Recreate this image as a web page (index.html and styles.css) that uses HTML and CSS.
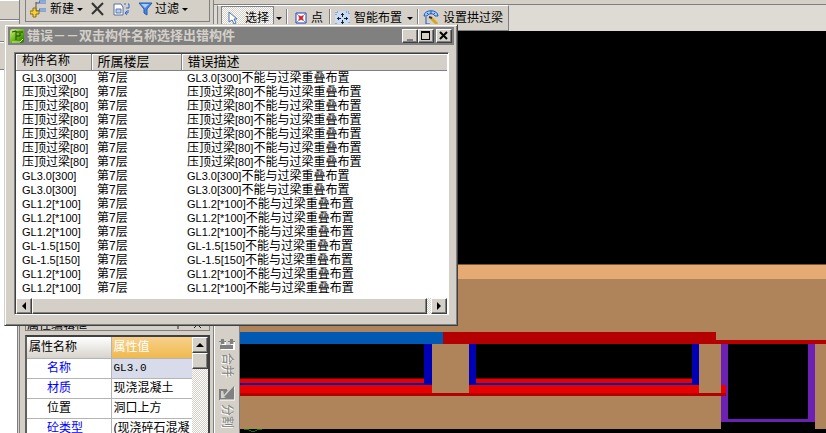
FILE: index.html
```html
<!DOCTYPE html>
<html lang="zh-CN">
<head>
<meta charset="utf-8">
<title>错误－－双击构件名称选择出错构件</title>
<link rel="stylesheet" href="styles.css">
</head>
<body>
<div class="app">
  <div class="rail">
    <div class="rail-cell"></div>
    <div class="rail-cell"></div>
    <div class="rail-cell"></div>
    <div class="rail-body"></div>
  </div>

  <aside class="side">
    <div class="side-tools">
      <button class="tool" type="button">
        <svg width="18" height="18" viewBox="0 0 18 18"><path d="M6 2v12M6 3h3M6 11h3" stroke="#555" fill="none"/><path d="M9 2h7M9 10h7" stroke="#4477c8" stroke-width="3"/><path d="M10 2h6M10 10h6" stroke="#cfe2fa"/><path d="M3 8h3v3h3v3H6v3H3v-3H0v-3h3z" fill="#f4cf3c" stroke="#8c6b12"/></svg>
        <span>新建</span><i class="caret"></i>
      </button>
      <button class="tool" type="button" aria-label="删除">
        <svg width="14" height="14" viewBox="0 0 14 14"><path d="M1 1l11 12M12 1L1 12" stroke="#333" stroke-width="2" fill="none"/></svg>
      </button>
      <button class="tool" type="button" aria-label="复制">
        <svg width="17" height="14" viewBox="0 0 17 14"><path d="M1 2h7l2 3v8H1z" fill="#fff" stroke="#5a6f96"/><path d="M3 7h5v4H3z" fill="#b8cdee" stroke="#5a7ab8"/><path d="M11 2h2M15 2h1v4h-3M15 8v3h-3M14 9l-2 2 2 2" stroke="#2f62d8" fill="none"/></svg>
      </button>
      <button class="tool" type="button">
        <svg width="15" height="14" viewBox="0 0 15 14"><path d="M1 1h13L9 7v6l-3-2V7z" fill="#3f86ee" stroke="#285cae"/><path d="M3 2h8L7 6z" fill="#a5cdff"/></svg>
        <span>过滤</span><i class="caret"></i>
      </button>
    </div>
    <div class="side-tree"></div>
    <section class="props">
      <div class="props-title"><span>属性编辑框</span>
        <svg width="34" height="12" viewBox="0 0 34 12"><path d="M1 8h8M5 8v4M3 3h4v5M21 4l7 7M28 4l-7 7" stroke="#222" fill="none"/></svg>
      </div>
      <div class="props-grid">
        <table>
          <thead><tr><th>属性名称</th><th class="value-head">属性值</th></tr></thead>
          <tbody>
            <tr><td class="name key">名称</td><td class="active">GL3.0</td></tr>
            <tr><td class="name key">材质</td><td>现浇混凝土</td></tr>
            <tr><td class="name">位置</td><td>洞口上方</td></tr>
            <tr><td class="name key">砼类型</td><td>(现浇碎石混凝</td></tr>
          </tbody>
        </table>
        <div class="vscroll">
          <button class="bevel" type="button" aria-label="向上滚动"><i class="arrow-up"></i></button>
          <div class="bevel thumb"></div>
        </div>
      </div>
    </section>
  </aside>

  <main class="work">
    <div class="work-top"></div>
    <div class="work-tools">
      <div class="draw-bar">
        <button class="tool pressed" type="button">
          <svg width="10" height="14" viewBox="0 0 10 14"><path d="M1 1v10l3-2 2 4 2-1-2-4h3z" fill="#fff" stroke="#4a6fa8"/></svg>
          <span>选择</span>
        </button>
        <i class="caret"></i><i class="sep"></i>
        <button class="tool gap-point" type="button">
          <svg width="12" height="12" viewBox="0 0 12 12"><path d="M1 1h10v10H1z" fill="#fff" stroke="#1e3fae"/><path d="M2 2l8 8M10 2l-8 8" stroke="#7a8fe0"/><path d="M4 4l4 4M8 4L4 8" stroke="#d8202c" stroke-width="2"/></svg>
          <span>点</span>
        </button>
        <i class="sep"></i>
        <button class="tool" type="button">
          <svg width="15" height="15" viewBox="0 0 15 15"><path d="M0 0h15v15H0z" fill="#c9dcf4"/><path d="M1 4V1h3M11 1h3v3M14 11v3h-3M4 14H1v-3" stroke="#5c7396" fill="none" stroke-dasharray="1 1"/><path d="M7 2h1v4H7zM7 9h1v4H7zM2 7h4v1H2zM9 7h4v1H9zM6 3h3v1H6zM6 11h3v1H6zM3 6h1v3H3zM11 6h1v3h-1z" fill="#112233"/></svg>
          <span>智能布置</span><i class="caret"></i>
        </button>
        <i class="sep"></i>
        <button class="tool" type="button">
          <svg width="16" height="16" viewBox="0 0 16 16"><path d="M1 6c0-7 14-7 14 0h-3c-1-3-7-3-8 0z" fill="#a9cdf7" stroke="#1c55c0"/><path d="M3 7v7h4M4 3l2 2M8 1v3M12 3l-2 2" stroke="#1c55c0" fill="none"/><path d="M8 8l6 6" stroke="#dca51c" stroke-width="3"/><path d="M6 7l3 1" stroke="#333" stroke-width="2"/></svg>
          <span>设置拱过梁</span>
        </button>
      </div>
    </div>
    <div class="stage">
      <div class="edit-bar">
        <button type="button">
          <svg width="16" height="12" viewBox="0 0 16 12" shape-rendering="crispEdges"><path d="M2 1h3v2h2v1H5v2H2V4H0V3h2zM11 1h3v2h2v1h-2v2h-3V4H9V3h2zM1 7h13v4H1z" fill="#808080"/><path d="M2 11h13V7h-1v4zM3 6h3V4M12 6h3V4" stroke="#fff" fill="none"/></svg>
          <span>合并</span>
        </button>
        <button type="button">
          <svg width="16" height="16" viewBox="0 0 16 16"><path d="M1 4v10h13V3M1 5h7" fill="none" stroke="#808080" stroke-width="2"/><path d="M5 12L15 1v13H9zM4 5h5L5 10z" fill="#808080"/><path d="M1 15h15V2" stroke="#fff" fill="none"/></svg>
          <span>分割</span>
        </button>
      </div>
      <svg class="model" viewBox="0 0 586 402" preserveAspectRatio="xMinYMin slice" shape-rendering="crispEdges">
        <path d="M0 0h586v402H0z" fill="#000"/>
        <path d="M0 248h586v150H0z" fill="#b0845a"/>
        <path d="M0 234h586v14H0z" fill="#e6aa74"/>
        <path d="M0 233h586v1H0z" fill="#7d5636"/>
        <path d="M0 313h192v34H0zM236 313h216v34H236zM481 313h94v85h-94z" fill="#000"/>
        <path d="M0 301h203v12H0z" fill="#005ab4"/>
        <path d="M203 301h273v8h110v4H203z" fill="#b40000"/>
        <path d="M0 347h184v1H0zM236 347h216v1H236z" fill="#700000"/>
        <path d="M0 348h184v4H0zM236 348h216v4H236zM0 354h192v8H0zM229 354h230v8H229z" fill="#e60000"/>
        <path d="M184 313h8v41H0v-2h184zM229 313h7v39h216v-39h7v41H229z" fill="#0000b4"/>
        <path d="M481 313h7v75h80v-75h7v78h-94z" fill="#6c20b4"/>
        <path d="M481 354h5v8h-5z" fill="#e60000"/>
        <path d="M0 362h486v3H0z" fill="#b40000"/>
        <path d="M4 398h3l6 3 6-3h3" stroke="#008000" fill="none"/>
      </svg>
    </div>
  </main>

  <section class="dialog" role="dialog" aria-labelledby="dialog-title">
    <header class="titlebar">
      <svg width="16" height="16" viewBox="0 0 16 16"><defs><linearGradient id="leaf" x2="1" y2="1"><stop stop-color="#d8f090"/><stop offset=".5" stop-color="#6cba1c"/><stop offset="1" stop-color="#1f6a00"/></linearGradient></defs><path d="M1 4q0-3 3-3h11v11q0 3-3 3H1z" fill="url(#leaf)"/><path d="M3 4l4-1v9M7 4h7M7 8h4V5" stroke="#1c4a00" fill="none"/><path d="M3 14h8l3-3" stroke="#e0f58c" fill="none"/></svg>
      <h1 id="dialog-title">错误－－双击构件名称选择出错构件</h1>
      <div class="win-buttons">
        <button class="bevel" type="button" aria-label="最小化"><svg width="10" height="10" viewBox="0 0 10 10"><path d="M2 8h6v2H2z" fill="#808080"/></svg></button>
        <button class="bevel" type="button" aria-label="最大化"><svg width="10" height="10" viewBox="0 0 10 10" shape-rendering="crispEdges"><path d="M0 0h9v9H0zM1 2v6h7V2z" fill="#000" fill-rule="evenodd"/></svg></button>
        <button class="bevel close" type="button" aria-label="关闭"><svg width="10" height="10" viewBox="0 0 10 10"><path d="M1 1l7 7M8 1L1 8" stroke="#000" stroke-width="2"/></svg></button>
      </div>
    </header>
    <div class="list">
      <table>
        <colgroup><col class="c-name"><col class="c-floor"><col></colgroup>
        <thead><tr><th class="narrow">构件名称</th><th>所属楼层</th><th>错误描述</th></tr></thead>
        <tbody>
          <tr><td><span>GL3.0[300]</span></td><td>第7层</td><td><span>GL3.0[300]</span>不能与过梁重叠布置</td></tr>
          <tr><td>压顶过梁<span>[80]</span></td><td>第7层</td><td>压顶过梁<span>[80]</span>不能与过梁重叠布置</td></tr>
          <tr><td>压顶过梁<span>[80]</span></td><td>第7层</td><td>压顶过梁<span>[80]</span>不能与过梁重叠布置</td></tr>
          <tr><td>压顶过梁<span>[80]</span></td><td>第7层</td><td>压顶过梁<span>[80]</span>不能与过梁重叠布置</td></tr>
          <tr><td>压顶过梁<span>[80]</span></td><td>第7层</td><td>压顶过梁<span>[80]</span>不能与过梁重叠布置</td></tr>
          <tr><td>压顶过梁<span>[80]</span></td><td>第7层</td><td>压顶过梁<span>[80]</span>不能与过梁重叠布置</td></tr>
          <tr><td>压顶过梁<span>[80]</span></td><td>第7层</td><td>压顶过梁<span>[80]</span>不能与过梁重叠布置</td></tr>
          <tr><td><span>GL3.0[300]</span></td><td>第7层</td><td><span>GL3.0[300]</span>不能与过梁重叠布置</td></tr>
          <tr><td><span>GL3.0[300]</span></td><td>第7层</td><td><span>GL3.0[300]</span>不能与过梁重叠布置</td></tr>
          <tr><td><span>GL1.2[*100]</span></td><td>第7层</td><td><span>GL1.2[*100]</span>不能与过梁重叠布置</td></tr>
          <tr><td><span>GL1.2[*100]</span></td><td>第7层</td><td><span>GL1.2[*100]</span>不能与过梁重叠布置</td></tr>
          <tr><td><span>GL1.2[*100]</span></td><td>第7层</td><td><span>GL1.2[*100]</span>不能与过梁重叠布置</td></tr>
          <tr><td><span>GL-1.5[150]</span></td><td>第7层</td><td><span>GL-1.5[150]</span>不能与过梁重叠布置</td></tr>
          <tr><td><span>GL-1.5[150]</span></td><td>第7层</td><td><span>GL-1.5[150]</span>不能与过梁重叠布置</td></tr>
          <tr><td><span>GL1.2[*100]</span></td><td>第7层</td><td><span>GL1.2[*100]</span>不能与过梁重叠布置</td></tr>
          <tr><td><span>GL1.2[*100]</span></td><td>第7层</td><td><span>GL1.2[*100]</span>不能与过梁重叠布置</td></tr>
        </tbody>
      </table>
      <div class="hscroll">
        <button class="bevel" type="button" aria-label="向左滚动"><i class="arrow-left"></i></button>
        <div class="bevel thumb"></div>
        <button class="bevel" type="button" aria-label="向右滚动"><i class="arrow-right"></i></button>
      </div>
    </div>
  </section>
</div>
</body>
</html>
```
FILE: styles.css
```css
* { box-sizing: border-box; }

:root {
  --face: #d4d0c8;
  --shade: #808080;
  --dark: #404040;
  --dither: repeating-conic-gradient(#fff 0 25%, #d4d0c8 0 50%) 0 0 / 2px 2px;
}

body {
  margin: 0;
  font: 12px/14px "Liberation Sans", "Noto Sans CJK SC", sans-serif;
  color: #000;
  background: var(--face);
}

button {
  margin: 0;
  padding: 0;
  border: 0;
  background: none;
  font: inherit;
  color: inherit;
}

svg { display: block; flex: none; }

table { border-collapse: collapse; border-spacing: 0; table-layout: fixed; width: 100%; }
th, td { padding: 0; text-align: left; font-weight: normal; white-space: nowrap; overflow: hidden; }

.app {
  position: relative;
  display: grid;
  grid-template-columns: 20px 190px 1fr;
  height: 100vh;
  overflow: hidden;
}

/* Left rail */
.rail {
  display: grid;
  grid-template-rows: 20px 22px 28px 1fr;
  border-right: 1px solid var(--shade);
}
.rail-cell { border-bottom: 1px solid var(--shade); border-top: 1px solid #fff; }
.rail-body { background: #fff; border-right: 1px solid var(--shade); margin-right: 1px; }

/* Component and property column */
.side {
  display: grid;
  grid-template-rows: 22px 1fr 116px;
  padding-left: 5px;
  min-height: 0;
}
.side-tools {
  display: flex;
  align-items: center;
  gap: 8px;
  padding: 0 4px 3px;
  border: solid var(--shade);
  border-width: 0 1px 1px;
}
.tool { display: flex; align-items: center; gap: 2px; white-space: nowrap; }

.caret {
  flex: none;
  margin-left: 1px;
  border: 3px solid transparent;
  border-top-color: #000;
  border-bottom: 0;
}

.props { display: flex; flex-direction: column; overflow: hidden; }
.props-title {
  display: flex;
  justify-content: space-between;
  height: 14px;
  line-height: 16px;
  padding: 0 2px 0 1px;
  border: 1px solid var(--shade);
  border-top: 0;
}
.props-grid {
  flex: 1;
  display: flex;
  margin-top: 4px;
  border: 2px solid var(--dark);
  border-bottom: 0;
  border-left-color: #606060;
  background: #fff;
}
.props-grid table { flex: 1; width: 0; line-height: 18px; }
.props-grid th, .props-grid td {
  height: 20px;
  padding-left: 2px;
  border-bottom: 1px solid #b4b4b4;
}
.props-grid th { height: 21px; }
.props-grid th:first-child, .props-grid td:first-child { width: 84px; border-right: 1px solid #b4b4b4; }
.props-grid th { background: linear-gradient(#fff, #d8d4cc); }
.props-grid .value-head { color: #fff; background: linear-gradient(#f8d08c, #eeb94e); }
.props-grid .name { padding-left: 20px; }
.props-grid .key { color: #00f; }
.props-grid .active { background: #d8dcea; font-family: "Liberation Mono", monospace; font-size: 11px; }

.vscroll { width: 16px; background: var(--dither); }
.vscroll .bevel { width: 16px; height: 16px; }

.bevel {
  display: flex;
  align-items: center;
  justify-content: center;
  background: var(--face);
  border: 1px solid;
  border-color: #fff var(--dark) var(--dark) #fff;
  box-shadow: inset -1px -1px var(--shade);
}

.arrow-up { border: 4px solid transparent; border-top: 0; border-bottom-color: #000; }
.arrow-left { border: 4px solid transparent; border-left: 0; border-right-color: #000; }
.arrow-right { border: 4px solid transparent; border-right: 0; border-left-color: #000; }

/* Drawing area */
.work {
  display: grid;
  grid-template-rows: 5px 26px 1fr;
  min-width: 0;
  min-height: 0;
  padding-left: 3px;
}
.work-top { border: solid var(--shade); border-width: 0 0 1px 1px; }
.work-tools { display: flex; border-left: 1px solid var(--shade); background: #dedbd4; }
.draw-bar {
  display: flex;
  align-items: center;
  gap: 4px;
  padding: 0 5px 0 3px;
  margin-left: 3px;
  border: 1px solid var(--shade);
  border-top-color: #fff;
  background: var(--face);
}
.draw-bar .tool { gap: 4px; }
.draw-bar .pressed {
  align-self: stretch;
  padding: 0 4px 0 6px;
  gap: 7px;
  border: 1px solid var(--shade);
  margin-right: -3px;
  background: var(--dither);
}
.draw-bar .gap-point { padding: 0 2px 0 3px; }
.sep { width: 2px; height: 18px; border-left: 1px solid var(--shade); border-right: 1px solid #fff; }

.stage { display: flex; min-height: 0; border-left: 1px solid var(--shade); }
.edit-bar {
  display: flex;
  flex: 0 0 26px;
  flex-direction: column;
  justify-content: flex-end;
  gap: 8px;
  padding-bottom: 5px;
  border-left: 1px solid #fff;
  border-right: 1px solid var(--shade);
}
.edit-bar button { display: flex; flex-direction: column; align-items: center; gap: 3px; color: var(--shade); }
.edit-bar span { writing-mode: vertical-rl; text-orientation: sideways; text-shadow: 1px 1px #fff; }
.model { flex: 1; min-width: 0; width: 0; height: 100%; }

/* Error dialog */
.dialog {
  position: absolute;
  left: 4px;
  top: 24px;
  width: 454px;
  padding: 2px 3px 10px;
  background: var(--face);
  border: 1px solid;
  border-color: var(--face) var(--dark) var(--dark) var(--face);
  box-shadow: inset 1px 1px #fff, inset -1px -1px var(--shade);
}
.titlebar {
  display: flex;
  align-items: center;
  gap: 2px;
  height: 18px;
  padding: 0 2px 0 1px;
  background: var(--shade);
  color: var(--face);
}
.titlebar h1 { flex: 1; margin: 0; font-size: 13px; line-height: 18px; white-space: nowrap; }
.win-buttons { display: flex; color: #000; }
.win-buttons .bevel { width: 16px; height: 14px; }
.win-buttons .close { margin-left: 2px; }

.list {
  margin: 7px 5px 0 6px;
  border: 1px solid;
  border-color: var(--shade) #fff #fff var(--shade);
  background: #fff;
  box-shadow: inset 1px 1px var(--dark);
  padding: 1px 1px 0;
}
.list table { margin-bottom: 3px; }
.c-name { width: 75px; }
.c-floor { width: 90px; }
.list th {
  height: 16px;
  padding-left: 6px;
  font-size: 13px;
  line-height: 15px;
  background: var(--face);
  border-right: 1px solid var(--shade);
  border-bottom: 1px solid var(--shade);
  box-shadow: inset 1px 1px #fff;
}
.list .narrow { font-size: 12px; }
.list th:last-child { border-right: 0; }
.list td { height: 14px; padding-left: 6px; }
.list td span { font-size: 11px; }

.hscroll { display: flex; height: 16px; background: var(--dither); }
.hscroll button { width: 16px; }
.hscroll .thumb { flex: 1; margin-right: 4px; }
```
